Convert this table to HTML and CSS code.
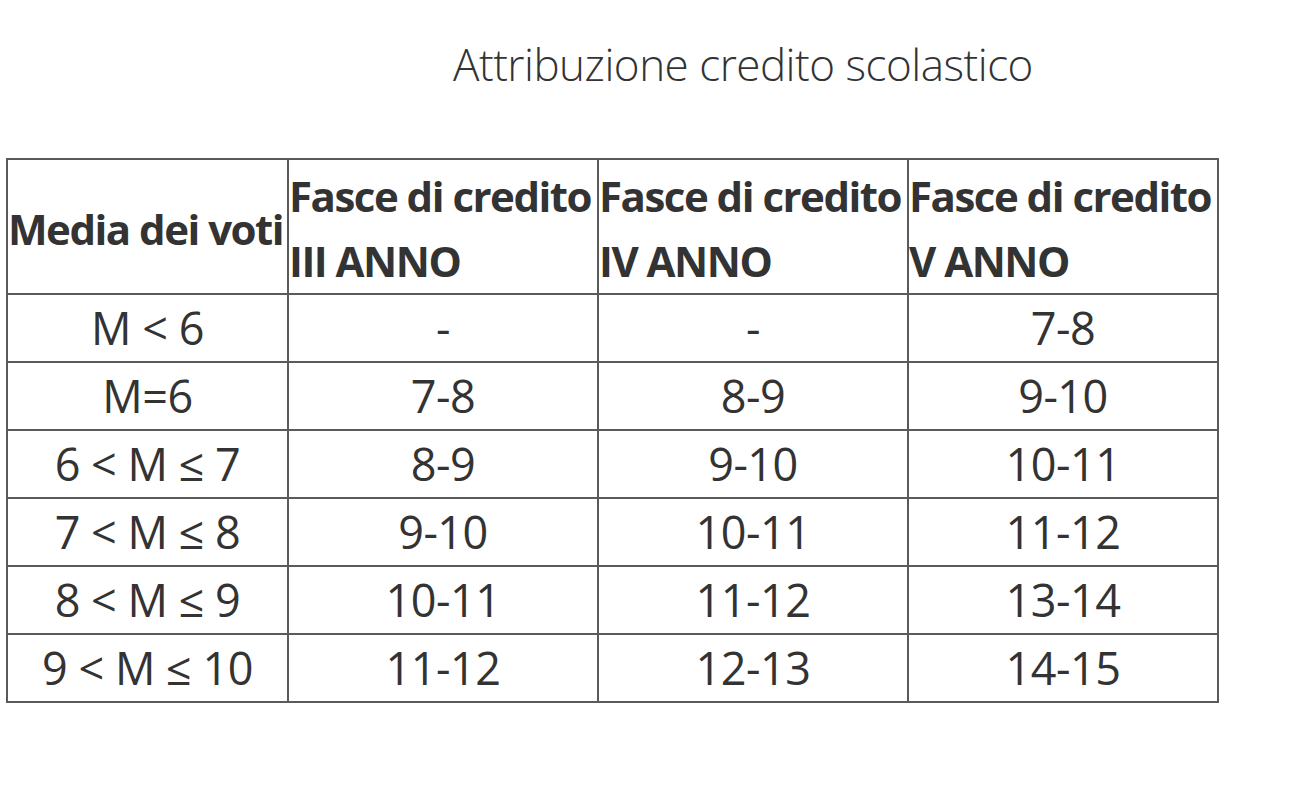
FILE: index.html
```html
<!DOCTYPE html>
<html lang="it">
<head>
<meta charset="utf-8">
<title>Attribuzione credito scolastico</title>
<link rel="stylesheet" href="styles.css">
</head>
<body>
<div class="page">
  <h1 class="title">Attribuzione credito scolastico</h1>
  <table class="credits">
    <colgroup>
      <col class="c1"><col class="c2"><col class="c3"><col class="c4">
    </colgroup>
    <thead>
      <tr>
        <th>Media dei voti</th>
        <th>Fasce di credito<br>III ANNO</th>
        <th>Fasce di credito<br>IV ANNO</th>
        <th>Fasce di credito<br>V ANNO</th>
      </tr>
    </thead>
    <tbody>
      <tr><td>M &lt; 6</td><td>-</td><td>-</td><td>7-8</td></tr>
      <tr><td>M=6</td><td>7-8</td><td>8-9</td><td>9-10</td></tr>
      <tr><td>6 &lt; M ≤ 7</td><td>8-9</td><td>9-10</td><td>10-11</td></tr>
      <tr><td>7 &lt; M ≤ 8</td><td>9-10</td><td>10-11</td><td>11-12</td></tr>
      <tr><td>8 &lt; M ≤ 9</td><td>10-11</td><td>11-12</td><td>13-14</td></tr>
      <tr><td>9 &lt; M ≤ 10</td><td>11-12</td><td>12-13</td><td>14-15</td></tr>
    </tbody>
  </table>
</div>
</body>
</html>
```

FILE: styles.css
```css
html, body {
  margin: 0;
  padding: 0;
  background: #ffffff;
}
body {
  font-family: "Open Sans", "Noto Sans", sans-serif;
  color: #333333;
}
.page {
  padding: 36px 0 0 6px;
}
.title {
  margin: 0 0 0 447px;
  font-weight: 300;
  font-size: 44px;
  line-height: 56px;
  letter-spacing: -0.5px;
  color: #333333;
}
.credits {
  margin-top: 66px;
  border-collapse: collapse;
  table-layout: fixed;
  width: 1211px;
  border: 2px solid #5a5a5a;
}
.c1 { width: 281px; }
.c2 { width: 310px; }
.c3 { width: 310px; }
.c4 { width: 310px; }
.credits th,
.credits td {
  border: 2px solid #5a5a5a;
  padding: 0;
}
.credits th {
  height: 129px;
  text-align: left;
  font-weight: 700;
  font-size: 42px;
  line-height: 65px;
  letter-spacing: -1.5px;
  white-space: nowrap;
  padding-top: 3px;
}
.credits td {
  height: 66px;
  text-align: center;
  font-weight: 400;
  font-size: 45px;
  line-height: 66px;
  letter-spacing: -0.5px;
}
.credits tbody tr:first-child td,
.credits tbody tr:last-child td {
  height: 65px;
}
```
